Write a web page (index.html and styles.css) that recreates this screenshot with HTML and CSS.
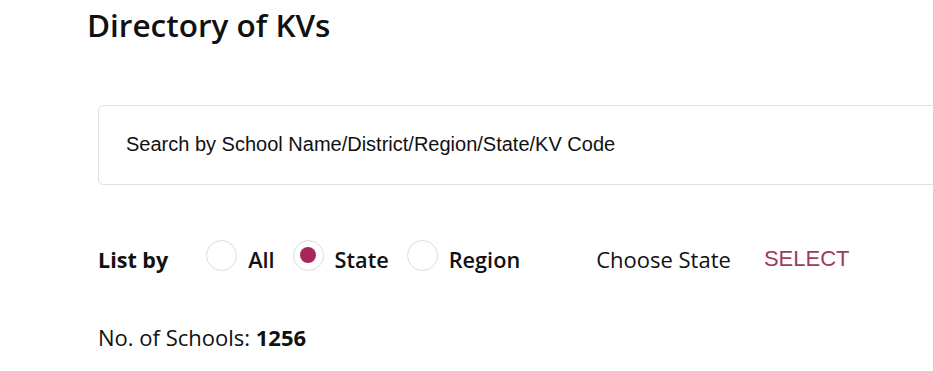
FILE: index.html
```html
<!DOCTYPE html>
<html lang="en">
<head>
<meta charset="utf-8">
<title>Directory of KVs</title>
<link rel="stylesheet" href="styles.css">
</head>
<body>
<main class="page">
  <h1 class="title">Directory of KVs</h1>
  <div class="search">
    <span class="search-text">Search by School Name/District/Region/State/KV Code</span>
  </div>
  <div class="filters">
    <span class="list-label">List by</span>
    <label class="option"><span class="radio"></span><span>All</span></label>
    <label class="option"><span class="radio checked"></span><span>State</span></label>
    <label class="option"><span class="radio"></span><span>Region</span></label>
    <span class="choose">Choose State</span>
    <span class="select">SELECT</span>
  </div>
  <p class="count">No. of Schools: <b>1256</b></p>
</main>
</body>
</html>
```

FILE: styles.css
```css
html, body {
  margin: 0;
  padding: 0;
  background: #fff;
  overflow: hidden;
}
body {
  font-family: "Open Sans", "Liberation Sans", sans-serif;
  color: #111;
}
.page {
  width: 933px;
  overflow: hidden;
}
.title {
  margin: 0;
  padding: 3px 0 0 87px;
  font-size: 31.5px;
  font-weight: 600;
  line-height: 44px;
  color: #111;
}
.search {
  margin: 58px 0 0 98px;
  width: 900px;
  height: 80px;
  border: 1px solid #e2e2e2;
  border-radius: 5px;
  display: flex;
  align-items: center;
  padding-left: 27px;
  box-sizing: border-box;
}
.search-text {
  font-family: "Liberation Sans", Arial, sans-serif;
  font-size: 20px;
  color: #111;
  margin-top: -2px;
}
.filters {
  margin: 54px 0 0 98px;
  display: flex;
  align-items: center;
  height: 40px;
}
.list-label {
  font-size: 21.5px;
  font-weight: 700;
  margin-right: 38px;
}
.option {
  display: flex;
  align-items: center;
  font-size: 21.7px;
  font-weight: 600;
  margin-right: 18px;
}
.radio {
  width: 29px;
  height: 29px;
  border: 1px solid #dcdcdc;
  border-radius: 50%;
  margin-right: 11px;
  display: flex;
  align-items: center;
  justify-content: center;
  margin-top: -8px;
}
.radio.checked::after {
  content: "";
  width: 16px;
  height: 16px;
  border-radius: 50%;
  background: #a6285a;
}
.choose {
  font-size: 22px;
  margin-left: 58px;
  margin-right: 33px;
}
.select {
  font-family: "Liberation Sans", Arial, sans-serif;
  font-size: 22px;
  color: #9c3b62;
}
.count {
  margin: 43px 0 0 98px;
  font-size: 22px;
}
.count b {
  font-weight: 700;
}
```
